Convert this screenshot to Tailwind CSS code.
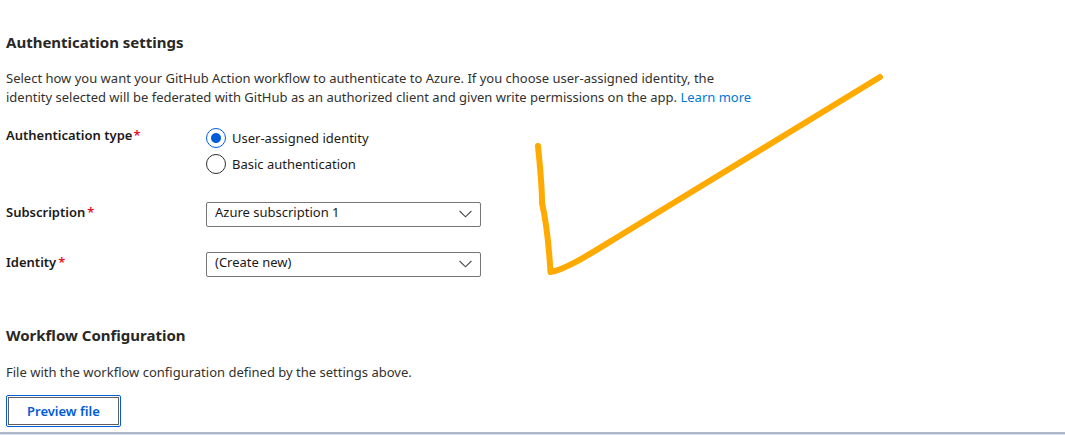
<!DOCTYPE html>
<html lang="en">
<head>
<meta charset="utf-8">
<title>Authentication settings</title>
<script src="https://cdn.jsdelivr.net/npm/@tailwindcss/browser@4"></script>
</head>
<body class="bg-white font-['Noto_Sans','Open_Sans',sans-serif] text-[13px] leading-[19px] text-[#323130]">
<main class="relative flex min-h-screen flex-col overflow-x-hidden">
  <div class="grow px-[6px] pt-8 pb-[5px]">
    <section>
      <h2 class="text-[15px] leading-[20px] font-bold text-[#292827]">Authentication settings</h2>
      <p class="mt-[17px] max-w-[760px]">Select how you want your GitHub Action workflow to authenticate to Azure. If you choose user-assigned identity, the<br>identity selected will be federated with GitHub as an authorized client and given write permissions on the app. <a href="#" class="text-[#0078d4]">Learn more</a></p>

      <form class="text-[#1b1a19]">
        <fieldset class="mt-[18px] flex">
          <legend class="float-left w-[200px] pt-px font-semibold">Authentication type<span class="ml-px text-[#e81123]">*</span></legend>
          <div class="flex flex-col gap-[6px] pt-[3px]">
            <label class="flex h-5 items-center gap-[6px]"><input type="radio" name="auth" checked class="size-5 appearance-none rounded-full border border-[#323130] bg-white checked:border-[#015cda] checked:bg-[radial-gradient(circle,#015cda_4.5px,transparent_5.5px)]">User-assigned identity</label>
            <label class="flex h-5 items-center gap-[6px]"><input type="radio" name="auth" class="size-5 appearance-none rounded-full border border-[#323130] bg-white checked:border-[#015cda] checked:bg-[radial-gradient(circle,#015cda_4.5px,transparent_5.5px)]">Basic authentication</label>
          </div>
        </fieldset>
        <div class="mt-7 flex">
          <label for="subscription" class="w-[200px] pt-px font-semibold">Subscription<span class="ml-[2px] text-[#e81123]">*</span></label>
          <div class="relative w-[275px]">
            <select id="subscription" class="block h-[25px] w-full appearance-none rounded-[2px] border border-[#777675] bg-white pr-8 pb-[4px] pl-2 leading-[19px]"><option>Azure subscription 1</option></select>
            <svg class="pointer-events-none absolute top-[8px] right-[9px] h-[8px] w-[13px]" viewBox="0 0 13 8" fill="none" stroke="#4a4948" stroke-width="1.1"><path d="M.6 1 6.5 6.8 12.4 1"/></svg>
          </div>
        </div>
        <div class="mt-[25px] flex">
          <label for="identity" class="w-[200px] pt-px font-semibold">Identity<span class="ml-[2px] text-[#e81123]">*</span></label>
          <div class="relative w-[275px]">
            <select id="identity" class="block h-[25px] w-full appearance-none rounded-[2px] border border-[#777675] bg-white pr-8 pb-[4px] pl-2 leading-[19px]"><option>(Create new)</option></select>
            <svg class="pointer-events-none absolute top-[8px] right-[9px] h-[8px] w-[13px]" viewBox="0 0 13 8" fill="none" stroke="#4a4948" stroke-width="1.1"><path d="M.6 1 6.5 6.8 12.4 1"/></svg>
          </div>
        </div>
      </form>
    </section>

    <section class="mt-12">
      <h2 class="text-[15px] leading-[20px] font-bold text-[#292827]">Workflow Configuration</h2>
      <p class="mt-[18px]">File with the workflow configuration defined by the settings above.</p>
      <button type="button" class="mt-[13px] block rounded-[2px] border border-[#015cda] bg-white p-px"><span class="block border border-[#605e5c] px-[18px] py-[4px] leading-[18px] font-semibold text-[#015cda]">Preview file</span></button>
    </section>
  </div>
  <footer class="h-[3px] border-t-2 border-[#b0b7c8] bg-[#d3e0f4]"></footer>

  <!-- Hand-drawn tick mark -->
  <svg class="pointer-events-none absolute top-[70px] left-[530px] h-[210px] w-[360px]" viewBox="530 70 360 210" fill="none" stroke="#ffaa00" stroke-width="6" stroke-linecap="round" stroke-linejoin="round" aria-hidden="true"><path d="M538 146C540 167 542 184 542 203C548 229 549 250 550.500 272C565 270 590 254 616 238L880 77"/></svg>
</main>
</body>
</html>
